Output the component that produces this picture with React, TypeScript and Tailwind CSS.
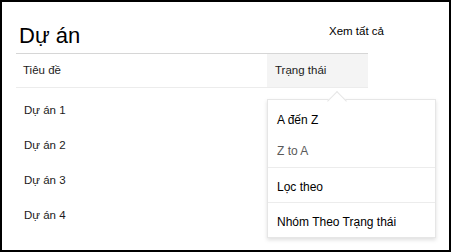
import React from 'react';

const rows = ['Dự án 1', 'Dự án 2', 'Dự án 3', 'Dự án 4'];

export default function App() {
  return (
    <div
      className="relative w-[451px] h-[252px] border-2 border-black bg-white text-[#1b1b1b] overflow-hidden"
      style={{ fontFamily: '"Liberation Sans", Arial, sans-serif' }}
    >
      <div className="ml-[14px] w-[352px]">
        {/* header */}
        <div className="flex items-end h-[52px] border-b border-[#d6d6d6]">
          <h1 className="text-[22px] leading-[26px] pl-[3px] mb-[4px] text-black">Dự án</h1>
          <a className="ml-auto -mr-[16px] mb-[13px] text-[11.5px] text-black cursor-pointer">Xem tất cả</a>
        </div>

        {/* column headers */}
        <div className="flex h-[34px] border-b border-[#ececec] text-[11.5px]">
          <div className="flex-1 flex items-center pl-[7px]">Tiêu đề</div>
          <div className="w-[101px] flex items-center pl-[8px] bg-[#f4f4f4]">Trạng thái</div>
        </div>

        {/* rows */}
        <div className="pt-[5px] text-[11.5px]">
          {rows.map((r) => (
            <div key={r} className="h-[35px] flex items-center pl-[8px]">
              {r}
            </div>
          ))}
        </div>
      </div>

      {/* dropdown menu */}
      <div className="absolute left-[265px] top-[97px] w-[169px] h-[139px] bg-white border border-[#e6e6e6] shadow-[0_2px_4px_rgba(0,0,0,0.13)] text-[12px]">
        <div className="absolute -top-[6px] left-[62px] w-[14px] h-[14px] bg-white border-t border-l border-[#e6e6e6] rotate-45" />
        <div className="relative pt-[4px] pb-[1px] border-b border-[#ececec]">
          <div className="h-[31px] flex items-center pl-[9px] text-black">A đến Z</div>
          <div className="h-[31px] flex items-center pl-[9px] text-[#5a5a5a]">Z to A</div>
        </div>
        <div className="pt-[4px] border-b border-[#ececec]">
          <div className="h-[30px] flex items-center pl-[9px] text-black">Lọc theo</div>
        </div>
        <div className="pt-[3px]">
          <div className="h-[31px] flex items-center pl-[9px] text-black">Nhóm Theo Trạng thái</div>
        </div>
      </div>
    </div>
  );
}
